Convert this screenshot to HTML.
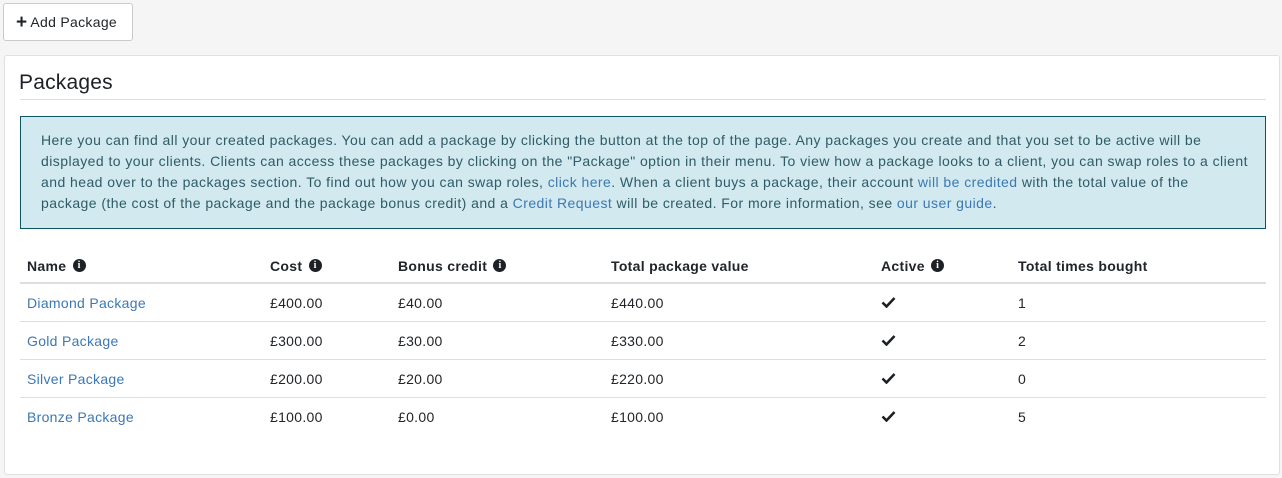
<!DOCTYPE html>
<html><head><style>
body{margin:0;background:#f5f5f6;font-family:"Liberation Sans",sans-serif;width:1282px;height:478px;overflow:hidden;position:relative;color:#212529}
.btn{position:absolute;left:3px;top:3px;width:130px;height:38px;border:1px solid #c9cbcf;border-radius:3px;background:#fff;box-sizing:border-box;font-size:14px;line-height:36px;padding-left:12px;color:#212529;letter-spacing:0.3px}
.btn b{font-size:19px;font-weight:bold;vertical-align:-1px;margin-right:3px}
.panel{position:absolute;left:4px;top:55px;width:1276px;height:420px;background:#fff;border:1px solid #dfe0e3;border-radius:3px;box-sizing:border-box}
h2{position:absolute;left:14px;top:15px;margin:0;font-weight:normal;font-size:21px;color:#1d2125;letter-spacing:0.2px}
.hr{position:absolute;left:15px;top:43px;width:1246px;height:1px;background:#dcdee1}
.alert{position:absolute;left:15px;top:60px;width:1246px;height:113px;background:#d2eaef;border:1px solid #0e5561;box-sizing:border-box;padding:13px 0 0 20px;font-size:14px;line-height:21px;color:#2f5b66;letter-spacing:0.44px}
.alert div{white-space:nowrap}
a{color:#3c78b3;text-decoration:none}
table{position:absolute;left:15px;top:193px;width:1246px;border-collapse:collapse;font-size:14px;letter-spacing:0.3px}
th{text-align:left;font-weight:bold;height:33px;padding:0 0 0 7px;border-bottom:2px solid #dcdee1;vertical-align:middle;line-height:16px}
td{height:37px;padding:0 0 0 7px;border-bottom:1px solid #dcdee1;color:#212529}
tr:last-child td{border-bottom:none}
.i{display:inline-block;width:13px;height:13px;border-radius:50%;background:#1d2125;color:#fff;font-size:10px;line-height:13px;text-align:center;font-weight:bold;vertical-align:top;margin-top:1px;margin-left:2px;font-family:"Liberation Serif",serif;letter-spacing:0}
</style></head><body>
<div class="btn"><b>+</b>Add Package</div>
<div class="panel">
<h2>Packages</h2>
<div class="hr"></div>
<div class="alert">
<div>Here you can find all your created packages. You can add a package by clicking the button at the top of the page. Any packages you create and that you set to be active will be</div>
<div>displayed to your clients. Clients can access these packages by clicking on the "Package" option in their menu. To view how a package looks to a client, you can swap roles to a client</div>
<div>and head over to the packages section. To find out how you can swap roles, <a>click here</a>. When a client buys a package, their account <a>will be credited</a> with the total value of the</div>
<div>package (the cost of the package and the package bonus credit) and a <a>Credit Request</a> will be created. For more information, see <a>our user guide</a>.</div>
</div>
<table>
<tr><th style="width:236px">Name <span class="i">i</span></th><th style="width:121px">Cost <span class="i">i</span></th><th style="width:206px">Bonus credit <span class="i">i</span></th><th style="width:263px">Total package value</th><th style="width:130px">Active <span class="i">i</span></th><th>Total times bought</th></tr>
<tr><td><a>Diamond Package</a></td><td>£400.00</td><td>£40.00</td><td>£440.00</td><td><svg width="15" height="12" viewBox="0 0 15 12"><path d="M1.5 6.5l4 4 8-8.5" fill="none" stroke="#1d2125" stroke-width="2.6"/></svg></td><td>1</td></tr>
<tr><td><a>Gold Package</a></td><td>£300.00</td><td>£30.00</td><td>£330.00</td><td><svg width="15" height="12" viewBox="0 0 15 12"><path d="M1.5 6.5l4 4 8-8.5" fill="none" stroke="#1d2125" stroke-width="2.6"/></svg></td><td>2</td></tr>
<tr><td><a>Silver Package</a></td><td>£200.00</td><td>£20.00</td><td>£220.00</td><td><svg width="15" height="12" viewBox="0 0 15 12"><path d="M1.5 6.5l4 4 8-8.5" fill="none" stroke="#1d2125" stroke-width="2.6"/></svg></td><td>0</td></tr>
<tr><td><a>Bronze Package</a></td><td>£100.00</td><td>£0.00</td><td>£100.00</td><td><svg width="15" height="12" viewBox="0 0 15 12"><path d="M1.5 6.5l4 4 8-8.5" fill="none" stroke="#1d2125" stroke-width="2.6"/></svg></td><td>5</td></tr>
</table>
</div>
</body></html>
